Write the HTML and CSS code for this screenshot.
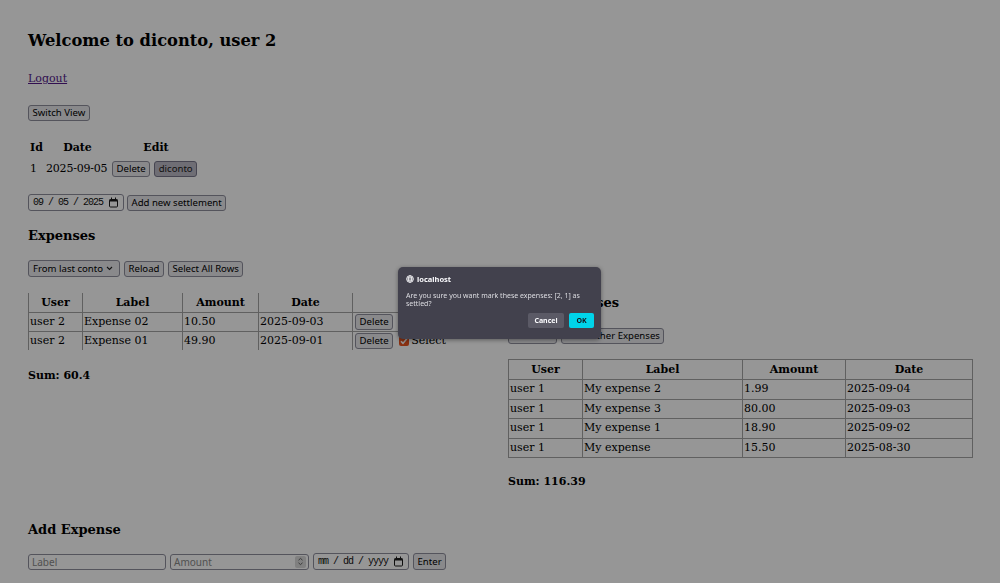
FILE: index.html
```html
<!DOCTYPE html>
<html lang="en">
<head>
<meta charset="utf-8">
<title>diconto</title>
<link rel="stylesheet" href="styles.css">
</head>
<body>
<div class="page">
  <h1>Welcome to diconto, user 2</h1>
  <p class="logout"><a href="#" class="link">Logout</a></p>
  <div class="row switch"><button class="btn">Switch View</button></div>

  <table class="settle">
    <thead>
      <tr><th class="c-id">Id</th><th class="c-date">Date</th><th class="c-edit">Edit</th></tr>
    </thead>
    <tbody>
      <tr>
        <td class="c-id">1</td>
        <td class="c-date">2025-09-05</td>
        <td class="c-edit"><div class="row gap4"><button class="btn">Delete</button><button class="btn btn-active">diconto</button></div></td>
      </tr>
    </tbody>
  </table>

  <div class="row gap3 date-form">
    <span class="field date w96"><span class="mono">09 / 05 / 2025</span>
      <svg class="cal" width="11" height="11" viewBox="0 0 11 11"><rect x="1.5" y="2.5" width="8" height="7.5" rx="1" fill="none" stroke="#1a1a1a"/><rect x="1.5" y="2.5" width="8" height="2" fill="#1a1a1a"/><line x1="3.5" y1="0.5" x2="3.5" y2="2.5" stroke="#1a1a1a"/><line x1="7.5" y1="0.5" x2="7.5" y2="2.5" stroke="#1a1a1a"/></svg>
    </span>
    <button class="btn">Add new settlement</button>
  </div>

  <div class="columns">
    <section class="col">
      <h3 class="h3 first">Expenses</h3>
      <div class="row gap4 controls">
        <span class="btn select">From last conto
          <svg width="7" height="5" viewBox="0 0 7 5"><polyline points="1,1 3.5,3.5 6,1" fill="none" stroke="#222" stroke-width="1.1"/></svg>
        </span>
        <button class="btn">Reload</button>
        <button class="btn">Select All Rows</button>
      </div>
      <table class="exp mine">
        <colgroup><col class="w54"><col class="w100"><col class="w76"><col class="w94"><col class="w140"></colgroup>
        <thead>
          <tr><th>User</th><th>Label</th><th>Amount</th><th>Date</th><th></th></tr>
        </thead>
        <tbody>
          <tr><td>user 2</td><td>Expense 02</td><td>10.50</td><td>2025-09-03</td>
            <td><div class="row act"><button class="btn">Delete</button><span class="check"><svg width="10" height="10" viewBox="0 0 10 10"><polyline points="2,5.2 4,7.4 8,2.6" fill="none" stroke="#fff" stroke-width="1.6"/></svg></span><span>Select</span></div></td></tr>
          <tr><td>user 2</td><td>Expense 01</td><td>49.90</td><td>2025-09-01</td>
            <td><div class="row act"><button class="btn">Delete</button><span class="check"><svg width="10" height="10" viewBox="0 0 10 10"><polyline points="2,5.2 4,7.4 8,2.6" fill="none" stroke="#fff" stroke-width="1.6"/></svg></span><span>Select</span></div></td></tr>
        </tbody>
      </table>
      <p class="sum sum-left">Sum: 60.4</p>
    </section>

    <section class="col">
      <h3 class="h3 other">Their Expenses</h3>
      <div class="row gap4 controls2">
        <button class="btn w49">Reload</button>
        <button class="btn">Hide Other Expenses</button>
      </div>
      <table class="exp theirs">
        <colgroup><col class="w74"><col class="w160"><col class="w103"><col class="w127"></colgroup>
        <thead>
          <tr><th>User</th><th>Label</th><th>Amount</th><th>Date</th></tr>
        </thead>
        <tbody>
          <tr><td>user 1</td><td>My expense 2</td><td>1.99</td><td>2025-09-04</td></tr>
          <tr><td>user 1</td><td>My expense 3</td><td>80.00</td><td>2025-09-03</td></tr>
          <tr><td>user 1</td><td>My expense 1</td><td>18.90</td><td>2025-09-02</td></tr>
          <tr><td>user 1</td><td>My expense</td><td>15.50</td><td>2025-08-30</td></tr>
        </tbody>
      </table>
      <p class="sum sum-right">Sum: 116.39</p>
    </section>
  </div>

  <h3 class="h3 add">Add Expense</h3>
  <div class="row gap4 add-form">
    <span class="field w138"><span class="ph">Label</span></span>
    <span class="field w139 num"><span class="ph">Amount</span>
      <span class="spin"><svg width="7" height="9" viewBox="0 0 7 9"><polyline points="1.5,3.2 3.5,1.4 5.5,3.2" fill="none" stroke="#555" stroke-width="0.9"/><polyline points="1.5,5.8 3.5,7.6 5.5,5.8" fill="none" stroke="#555" stroke-width="0.9"/></svg></span>
    </span>
    <span class="field date w96"><span class="mono">mm / dd / yyyy</span>
      <svg class="cal" width="11" height="11" viewBox="0 0 11 11"><rect x="1.5" y="2.5" width="8" height="7.5" rx="1" fill="none" stroke="#1a1a1a"/><rect x="1.5" y="2.5" width="8" height="2" fill="#1a1a1a"/><line x1="3.5" y1="0.5" x2="3.5" y2="2.5" stroke="#1a1a1a"/><line x1="7.5" y1="0.5" x2="7.5" y2="2.5" stroke="#1a1a1a"/></svg>
    </span>
    <button class="btn enter">Enter</button>
  </div>
</div>

<div class="overlay"></div>

<div class="dialog">
  <div class="d-title">
    <svg width="8" height="8" viewBox="0 0 16 16"><g fill="none" stroke="#fbfbfe" stroke-width="1.6"><circle cx="8" cy="8" r="6.8"/><ellipse cx="8" cy="8" rx="3" ry="6.8"/><line x1="1.2" y1="8" x2="14.8" y2="8"/><line x1="2.5" y1="4.5" x2="13.5" y2="4.5"/><line x1="2.5" y1="11.5" x2="13.5" y2="11.5"/></g></svg>
    <span>localhost</span>
  </div>
  <p class="d-msg">Are you sure you want mark these expenses: [2, 1] as settled?</p>
  <div class="d-btns">
    <span class="d-btn cancel">Cancel</span>
    <span class="d-btn ok">OK</span>
  </div>
</div>
</body>
</html>
```

FILE: styles.css
```css
html, body {
  margin: 0;
  padding: 0;
  background: #ffffff;
}

body {
  font-family: "DejaVu Serif", serif;
  font-size: 11px;
  color: #000;
  width: 1000px;
  height: 583px;
  overflow: hidden;
}

.page {
  padding: 31px 28px 0;
}

h1 {
  font-size: 16.3px;
  line-height: 20px;
  margin: 0;
  font-weight: bold;
}

.logout {
  margin: 21px 0 0;
  line-height: 14px;
}

.link {
  color: #551a8b;
  text-decoration: underline;
}

.row {
  display: flex;
  align-items: center;
}

.gap3 { gap: 3px; }
.gap4 { gap: 4px; }

.switch { margin-top: 19px; }

.btn {
  font-family: "Noto Sans", sans-serif;
  font-size: 9.6px;
  line-height: 14px;
  height: 16px;
  box-sizing: border-box;
  padding: 0 3.5px;
  background: #e9e9ed;
  color: #000;
  border: 1px solid #8f8f9d;
  border-radius: 3px;
  display: inline-flex;
  align-items: center;
  white-space: nowrap;
  margin: 0;
}

.btn-active {
  background: #bdbbc7;
  border-color: #77768a;
  color: #222;
}

/* settlement table */
.settle {
  margin-top: 19px;
  border-collapse: collapse;
  border-spacing: 0;
  table-layout: fixed;
  width: 172px;
}
.settle th {
  height: 16px;
  padding: 0;
  font-weight: bold;
  text-align: center;
  line-height: 14px;
}
.settle td {
  height: 25px;
  padding: 0 0 0 2px;
  line-height: 14px;
  white-space: nowrap;
}
.settle .c-id { width: 15px; text-align: left; }
.settle th.c-id { padding-left: 2px; }
.settle .c-date { width: 65px; }
.settle td.c-date { padding-left: 1px; letter-spacing: -0.2px; }
.settle .c-edit { width: 92px; }

.date-form { margin-top: 13px; }

.field {
  display: inline-flex;
  align-items: center;
  box-sizing: border-box;
  height: 16px;
  border: 1px solid #8f8f9d;
  border-radius: 3px;
  background: #fff;
  padding: 0 3px;
  font-family: "Noto Sans", sans-serif;
  font-size: 10px;
}

.field.date {
  height: 17px;
  padding: 0 4px;
  justify-content: space-between;
}

.mono {
  font-family: "Liberation Mono", "DejaVu Sans Mono", monospace;
  font-size: 10px;
  letter-spacing: -1px;
  color: #111;
}

.cal { flex: none; }

.w96 { width: 96px; }
.w138 { width: 138px; }
.w139 { width: 139px; }
.w49 { width: 49px; }

.columns {
  display: flex;
  gap: 16px;
  align-items: flex-start;
}

.col { width: 464px; }

.h3 {
  font-size: 13px;
  line-height: 16px;
  font-weight: bold;
  margin: 0;
}
.h3.first { margin-top: 17px; }
.h3.other { margin-top: 84px; }

.controls { margin-top: 16px; }
.controls2 { margin-top: 17px; }

.select {
  height: 17px;
  width: 92px;
  justify-content: space-between;
  padding: 0 6px 0 4px;
}

/* expense tables */
.exp {
  table-layout: fixed;
  width: 464px;
  border-collapse: collapse;
  border-spacing: 0;
}
.exp th, .exp td {
  padding: 0 1px;
  line-height: 14px;
  white-space: nowrap;
  vertical-align: middle;
}
.exp th { text-align: center; font-weight: bold; }
.exp td { text-align: left; }

.mine { margin-top: 16px; }
.mine th, .mine td { border-left: 1px solid #a3a3a3; }
.mine th { height: 19px; }
.mine td { border-top: 1px solid #a3a3a3; height: 18px; }

.theirs { margin-top: 15px; border: 1px solid #a3a3a3; }
.theirs th, .theirs td { border: 1px solid #a3a3a3; }
.theirs th { height: 19px; }
.theirs td { height: 18.5px; }

.w54 { width: 54px; }
.w100 { width: 100px; }
.w76 { width: 76px; }
.w94 { width: 94px; }
.w140 { width: 140px; }
.w74 { width: 74px; }
.w160 { width: 160px; }
.w103 { width: 103px; }
.w127 { width: 127px; }

.act { gap: 0; padding-left: 1px; }
.act .btn { margin-right: 6px; }

.check {
  width: 10px;
  height: 10px;
  border-radius: 2px;
  background: #e95420;
  display: inline-flex;
  align-items: center;
  justify-content: center;
  margin-right: 2px;
}

.sum {
  margin: 0;
  font-weight: bold;
  line-height: 14px;
}
.sum-left { margin-top: 19px; }
.sum-right { margin-top: 17px; }

.h3.add { margin-top: 33px; }
.add-form { margin-top: 15px; }

.ph { color: #8a8a8a; }

.num { justify-content: space-between; padding-right: 2px; }

.spin {
  width: 11px;
  height: 12px;
  background: #dadada;
  border-radius: 2px;
  display: inline-flex;
  align-items: center;
  justify-content: center;
}

.enter { height: 17px; }

/* modal */
.overlay {
  position: fixed;
  inset: 0;
  background: rgba(0, 0, 0, 0.41);
}

.dialog {
  position: absolute;
  left: 398px;
  top: 267px;
  width: 203px;
  height: 72px;
  box-sizing: border-box;
  background: #42414d;
  border-radius: 5px;
  box-shadow: 0 1px 4px rgba(0, 0, 0, 0.4);
  padding: 8px 7px 8px 8px;
  font-family: "Noto Sans", sans-serif;
  color: #fbfbfe;
}

.d-title {
  display: flex;
  align-items: center;
  gap: 3px;
  font-size: 7.5px;
  font-weight: bold;
  line-height: 8px;
}

.d-msg {
  margin: 9px 0 0;
  font-size: 7px;
  line-height: 8px;
  color: #dddde2;
  width: 182px;
}

.d-btns {
  display: flex;
  justify-content: flex-end;
  gap: 5px;
  margin-top: 5px;
}

.d-btn {
  height: 15px;
  display: inline-flex;
  align-items: center;
  justify-content: center;
  border-radius: 2px;
  font-size: 7px;
  font-weight: bold;
}

.cancel {
  width: 36px;
  background: #5b5a66;
  color: #fbfbfe;
}

.ok {
  width: 25px;
  background: #00d4ea;
  color: #15141a;
}
```
